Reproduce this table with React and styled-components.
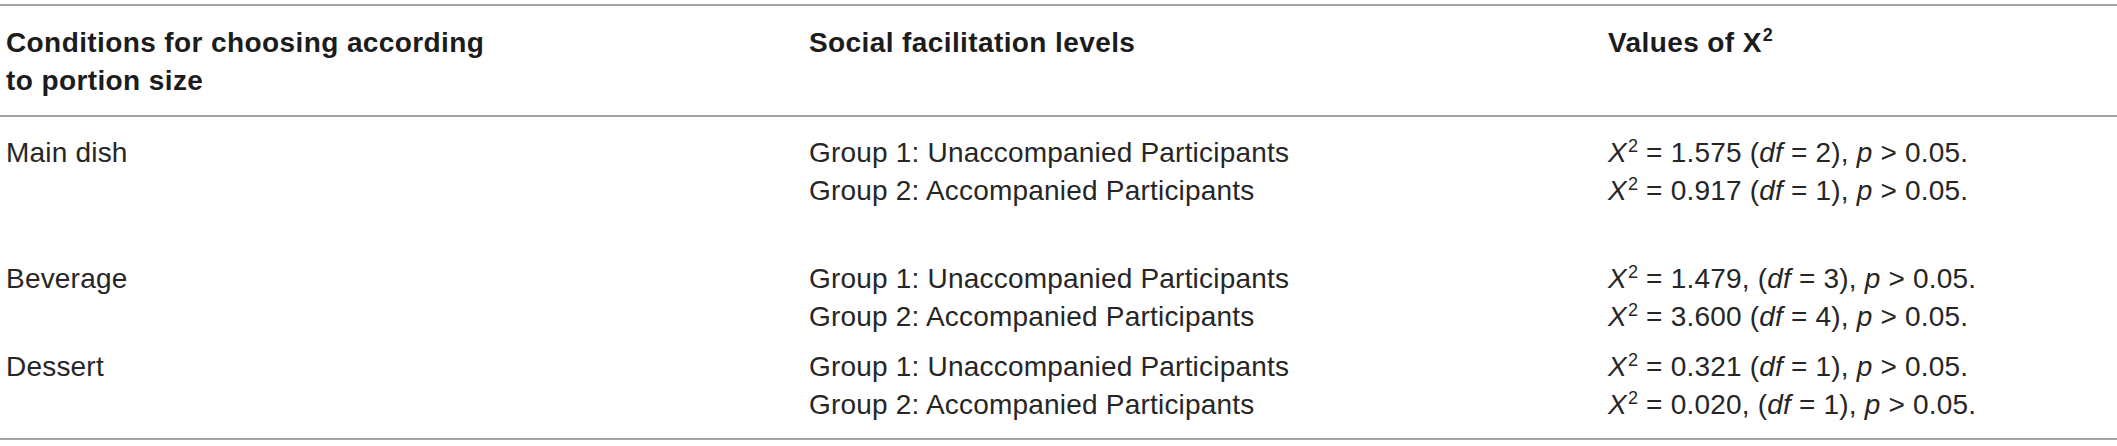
import React from "react"
import styled, { createGlobalStyle } from "styled-components"

const GlobalStyle = createGlobalStyle`
    html, body {
        margin: 0;
        padding: 0;
        background: #ffffff;
    }
    body {
        font-family: "Liberation Sans", Arial, Helvetica, sans-serif;
        color: #231f20;
    }
`

export const Table = styled.div`
    margin-top: 4px;
    border-top: 2px solid #a3a3a3;
    border-bottom: 2px solid #a3a3a3;
    width: 100%;
`

export const HeaderRow = styled.div`
    display: grid;
    grid-template-columns: 803px 799px 1fr;
    padding: 18px 0 15px 6px;
    border-bottom: 2px solid #a3a3a3;
`

export const HeadCell = styled.div`
    font-size: 28px;
    line-height: 38px;
    font-weight: bold;
    letter-spacing: 0.4px;
    color: #1c1c1c;
`

export const Body = styled.div`
    padding: 5px 0 14px;
`

export const Row = styled.div`
    display: grid;
    grid-template-columns: 803px 799px 1fr;
    padding: 12px 0 0 6px;
`

export const Cell = styled.div`
    font-size: 28px;
    line-height: 38px;
    letter-spacing: 0.2px;
    color: #262626;
`

export const Line = styled.div`
    height: 38px;
    white-space: nowrap;
`

export const Em = styled.i`
    font-style: italic;
`

export const Sup = styled.sup`
    font-size: 18px;
    line-height: 0;
    vertical-align: ${(props) => (props.bold ? "11px" : "10px")};
    font-style: normal;
    margin-left: 1px;
`

const rows = [
    {
        condition: "Main dish",
        blank: true,
        items: [
            ["Group 1: Unaccompanied Participants", "1.575", "2"],
            ["Group 2: Accompanied Participants", "0.917", "1"],
        ],
    },
    {
        condition: "Beverage",
        items: [
            ["Group 1: Unaccompanied Participants", "1.479,", "3"],
            ["Group 2: Accompanied Participants", "3.600", "4"],
        ],
    },
    {
        condition: "Dessert",
        items: [
            ["Group 1: Unaccompanied Participants", "0.321", "1"],
            ["Group 2: Accompanied Participants", "0.020,", "1"],
        ],
    },
]

const ChiValue = ({ value, df }) => (
    <Line>
        <Em>X</Em>
        <Sup>2</Sup> = {value} (<Em>df</Em> = {df}), <Em>p</Em> &gt; 0.05.
    </Line>
)

export default function App() {
    return (
        <>
            <GlobalStyle />
            <Table>
                <HeaderRow>
                    <HeadCell>
                        Conditions for choosing according
                        <br />
                        to portion size
                    </HeadCell>
                    <HeadCell>Social facilitation levels</HeadCell>
                    <HeadCell>
                        Values of X<Sup bold>2</Sup>
                    </HeadCell>
                </HeaderRow>
                <Body>
                    {rows.map((row) => (
                        <Row key={row.condition}>
                            <Cell>
                                <Line>{row.condition}</Line>
                            </Cell>
                            <Cell>
                                {row.items.map((item) => (
                                    <Line key={item[0]}>{item[0]}</Line>
                                ))}
                                {row.blank && <Line />}
                            </Cell>
                            <Cell>
                                {row.items.map((item) => (
                                    <ChiValue key={item[0]} value={item[1]} df={item[2]} />
                                ))}
                            </Cell>
                        </Row>
                    ))}
                </Body>
            </Table>
        </>
    )
}
